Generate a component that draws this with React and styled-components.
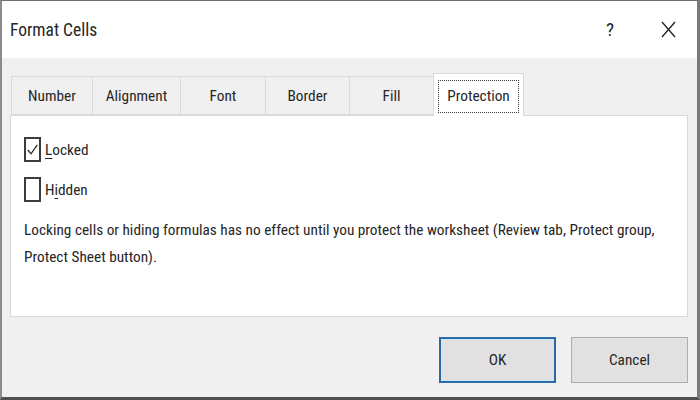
import React from "react";
import styled, { createGlobalStyle } from "styled-components";

const Global = createGlobalStyle`
  html, body { margin: 0; padding: 0; background: #ffffff; }
  * { box-sizing: border-box; }
`;

const FONT = `"Roboto Condensed", "DejaVu Sans Condensed", "Liberation Sans", sans-serif`;

const Window = styled.div`
  width: 700px;
  height: 400px;
  display: flex;
  flex-direction: column;
  border-top: 1px solid #6e6e6e;
  border-left: 2px solid #8c8c8c;
  border-right: 3px solid #7a7a7a;
  border-bottom: 3px solid #505050;
  font-family: ${FONT};
  color: #262626;
  background: #f0f0f0;
`;

const TitleBar = styled.div`
  height: 57px;
  flex: none;
  background: #ffffff;
  display: flex;
  align-items: center;
  padding: 0 0 0 8px;
`;

const Title = styled.div`
  font-size: 17.5px;
  flex: 1;
  margin-top: 1px;
`;

const TitleButton = styled.div`
  width: ${(p) => p.$w}px;
  margin-left: ${(p) => p.$gap || 0}px;
  display: flex;
  align-items: center;
  justify-content: center;
  font-size: 19px;
  color: #222;
`;

const Body = styled.div`
  flex: 1;
  display: flex;
  flex-direction: column;
  padding: 15px 9px 0 8px;
`;

const TabStrip = styled.div`
  display: flex;
  align-items: flex-end;
  padding-left: 1px;
  position: relative;
  z-index: 1;
`;

const Tab = styled.div`
  width: ${(p) => p.$w}px;
  height: ${(p) => (p.$active ? 43 : 39)}px;
  margin-left: -1px;
  margin-bottom: ${(p) => (p.$active ? -1 : 0)}px;
  border: 1px solid #d9d9d9;
  border-bottom: ${(p) => (p.$active ? "none" : "1px solid #d9d9d9")};
  background: ${(p) => (p.$active ? "#ffffff" : "#f0f0f0")};
  display: flex;
  align-items: stretch;
  justify-content: center;
  padding: ${(p) => (p.$active ? "6px 4px 3px 4px" : "2px 0 0 0")};
  font-size: 15.3px;
  &:first-child { margin-left: 0; }
`;

const TabLabel = styled.div`
  flex: 1;
  display: flex;
  align-items: center;
  justify-content: center;
  border: ${(p) => (p.$focus ? "1px dotted #3a3a3a" : "1px solid transparent")};
  padding-bottom: 1px;
`;

const Panel = styled.div`
  height: 202px;
  background: #ffffff;
  border: 1px solid #d9d9d9;
  padding: 21px 12px 0 13px;
  display: flex;
  flex-direction: column;
  gap: 15px;
`;

const CheckRow = styled.label`
  display: flex;
  align-items: center;
  gap: 4px;
  height: 25px;
  font-size: 15.3px;
`;

const Box = styled.span`
  flex: none;
  width: 17px;
  height: 25px;
  border: 2px solid #3c3c3c;
  display: flex;
  align-items: center;
  justify-content: center;
  background: #ffffff;
`;

const Mnemonic = styled.span`
  text-decoration: underline;
  text-underline-offset: 3px;
`;

const Description = styled.p`
  margin: 0;
  font-size: 15.3px;
  line-height: 27px;
  width: 640px;
`;

const ButtonRow = styled.div`
  display: flex;
  justify-content: flex-end;
  gap: 15px;
  padding: 20px 0 0 0;
`;

const Button = styled.button`
  width: 117px;
  height: 46px;
  font-family: ${FONT};
  font-size: 15.3px;
  color: #262626;
  background: #e1e1e1;
  border: ${(p) => (p.$default ? "2px solid #2a6aa6" : "1px solid #adadad")};
  box-shadow: ${(p) => (p.$default ? "inset 0 0 0 1px #cfe6f7" : "none")};
  padding: 0;
  cursor: pointer;
`;

const tabs = [
  { label: "Number", w: 82 },
  { label: "Alignment", w: 89 },
  { label: "Font", w: 86 },
  { label: "Border", w: 85 },
  { label: "Fill", w: 85 },
  { label: "Protection", w: 91, active: true },
];

export default function App() {
  return (
    <>
      <Global />
      <Window>
        <TitleBar>
          <Title>Format Cells</Title>
          <TitleButton $w={20}>?</TitleButton>
          <TitleButton $w={30} $gap={33}>
            <svg width="15" height="17" viewBox="0 0 15 17">
              <path d="M1 1 L14 16 M14 1 L1 16" stroke="#222" strokeWidth="1.3" fill="none" />
            </svg>
          </TitleButton>
          <TitleButton $w={14} />
        </TitleBar>
        <Body>
          <TabStrip>
            {tabs.map((t) => (
              <Tab key={t.label} $w={t.w} $active={t.active}>
                <TabLabel $focus={t.active}>{t.label}</TabLabel>
              </Tab>
            ))}
          </TabStrip>
          <Panel>
            <CheckRow>
              <Box>
                <svg width="11" height="11" viewBox="0 0 11 11">
                  <path d="M0.8 6 L4 9.8 L10.3 0.8" stroke="#2a2a2a" strokeWidth="1.3" fill="none" />
                </svg>
              </Box>
              <span>
                <Mnemonic>L</Mnemonic>ocked
              </span>
            </CheckRow>
            <CheckRow>
              <Box />
              <span>
                H<Mnemonic>i</Mnemonic>dden
              </span>
            </CheckRow>
            <Description>
              Locking cells or hiding formulas has no effect until you protect the worksheet (Review tab, Protect group,
              Protect Sheet button).
            </Description>
          </Panel>
          <ButtonRow>
            <Button $default>OK</Button>
            <Button>Cancel</Button>
          </ButtonRow>
        </Body>
      </Window>
    </>
  );
}
